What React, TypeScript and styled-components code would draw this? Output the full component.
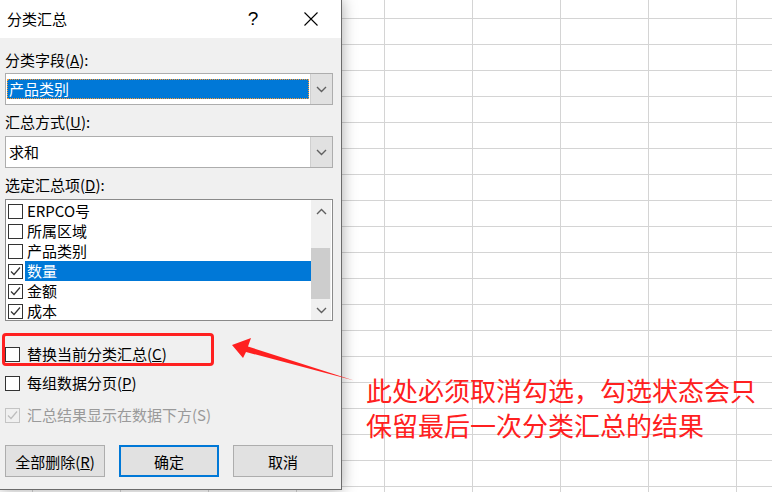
import React from 'react'
import styled, { createGlobalStyle } from 'styled-components'

type Field = {
  name: string;
  checked: boolean;
}

const fields: Field[] = [
  { name: 'ERPCO号', checked: false },
  { name: '所属区域', checked: false },
  { name: '产品类别', checked: false },
  { name: '数量', checked: true },
  { name: '金额', checked: true },
  { name: '成本', checked: true },
]

const selectedField = '数量'

const CheckMark = ({ color }: { color: string }) => (
  <svg width="13" height="13" viewBox="0 0 13 13">
    <path d="M2 6.5 L5 9.5 L11 2.5" fill="none" stroke={color} strokeWidth="1.2" />
  </svg>
)

const Chevron = ({ dir }: { dir: 'up' | 'down' }) => (
  <svg width="11" height="7" viewBox="0 0 11 7">
    <path
      d={dir === 'down' ? 'M1 1 L5.5 5.5 L10 1' : 'M1 6 L5.5 1.5 L10 6'}
      fill="none"
      stroke="#606060"
      strokeWidth="1.4"
    />
  </svg>
)

const CheckBox = ({ checked, disabled }: { checked: boolean; disabled?: boolean }) => (
  <Box $disabled={disabled}>
    {checked && <CheckMark color={disabled ? '#bdbdbd' : '#333'} />}
  </Box>
)

export default function App() {
  return (
    <Sheet>
      <GlobalStyle />
      <Dialog>
        <TitleBar>
          <Title>分类汇总</Title>
          <TitleButtons>
            <HelpButton>?</HelpButton>
            <CloseButton>
              <svg width="14" height="14" viewBox="0 0 14 14">
                <path d="M0.5 0.5 L13.5 13.5 M13.5 0.5 L0.5 13.5" stroke="#000" strokeWidth="1.1" />
              </svg>
            </CloseButton>
          </TitleButtons>
        </TitleBar>

        <Body>
          <Label $gap={0}>分类字段(<u>A</u>):</Label>
          <Combo $gap={3}>
            <ComboValue>
              <ComboSelected>产品类别</ComboSelected>
            </ComboValue>
            <ComboArrow><Chevron dir="down" /></ComboArrow>
          </Combo>

          <Label $gap={7}>汇总方式(<u>U</u>):</Label>
          <Combo $gap={4}>
            <ComboValue>
              <ComboText>求和</ComboText>
            </ComboValue>
            <ComboArrow><Chevron dir="down" /></ComboArrow>
          </Combo>

          <Label $gap={7}>选定汇总项(<u>D</u>):</Label>
          <ListBox>
            <ListItems>
              {fields.map((f) => (
                <ListRow key={f.name}>
                  <CheckBox checked={f.checked} />
                  <ListText $selected={f.name === selectedField}>{f.name}</ListText>
                </ListRow>
              ))}
            </ListItems>
            <ScrollBar>
              <ScrollArrow $size={22}><Chevron dir="up" /></ScrollArrow>
              <ScrollTrack>
                <Thumb $offset={26} $length={51} />
              </ScrollTrack>
              <ScrollArrow $size={20}><Chevron dir="down" /></ScrollArrow>
            </ScrollBar>
          </ListBox>

          <OptionRow $gap={23}>
            <CheckBox checked={false} />
            <OptionText>替换当前分类汇总(<u>C</u>)</OptionText>
          </OptionRow>
          <OptionRow $gap={9}>
            <CheckBox checked={false} />
            <OptionText>每组数据分页(<u>P</u>)</OptionText>
          </OptionRow>
          <OptionRow $gap={12}>
            <CheckBox checked disabled />
            <OptionText $disabled>汇总结果显示在数据下方(S)</OptionText>
          </OptionRow>

          <ButtonRow>
            <Button>全部删除(<u>R</u>)</Button>
            <Button $primary>确定</Button>
            <Button>取消</Button>
          </ButtonRow>
        </Body>

        <RedFrame />
      </Dialog>

      <ArrowLayer width="772" height="492" viewBox="0 0 772 492">
        <polygon
          points="232,345 251,338 248,346.5 354,380.5 246,352 243,358"
          fill="#ff2020"
        />
      </ArrowLayer>

      <Note>
        此处必须取消勾选，勾选状态会只<br />
        保留最后一次分类汇总的结果
      </Note>
    </Sheet>
  )
}

const GlobalStyle = createGlobalStyle`
  html, body {
    margin: 0;
    padding: 0;
  }
  body {
    font-family: "Noto Sans CJK SC", "Noto Sans", sans-serif;
    background: #fff;
  }
`

const Sheet = styled.div`
  position: relative;
  width: 772px;
  height: 492px;
  overflow: hidden;
  background-color: #fff;
  background-image:
    linear-gradient(to right, #d4d4d4 1px, transparent 1px),
    linear-gradient(to bottom, #d4d4d4 1px, transparent 1px);
  background-size: 88px 100%, 100% 26px;
  background-position: 32px 0, 0 18px;
`

const Dialog = styled.div`
  position: relative;
  width: 341px;
  height: 489px;
  background: #f0f0f0;
  border-right: 1px solid #6b6b6b;
  border-bottom: 1px solid #6b6b6b;
  box-shadow: 0 0 14px rgba(0, 0, 0, 0.35);
  display: flex;
  flex-direction: column;
  font-size: 15px;
  color: #000;
`

const TitleBar = styled.div`
  height: 38px;
  background: #fff;
  display: flex;
  align-items: center;
  padding-left: 7px;
`

const Title = styled.div`
  font-size: 15px;
  line-height: 20px;
`

const TitleButtons = styled.div`
  margin-left: auto;
  margin-right: 7px;
  display: flex;
  gap: 12px;
`

const HelpButton = styled.div`
  width: 46px;
  height: 38px;
  display: flex;
  align-items: center;
  justify-content: center;
  font-family: "Liberation Sans", sans-serif;
  font-size: 19px;
`

const CloseButton = styled.div`
  width: 46px;
  height: 38px;
  display: flex;
  align-items: center;
  justify-content: center;
`

const Body = styled.div`
  display: flex;
  flex-direction: column;
  padding: 12px 8px 0 5px;
`

const Label = styled.div<{ $gap: number }>`
  margin-top: ${(p) => p.$gap}px;
  height: 20px;
  line-height: 20px;
  white-space: nowrap;
`

const Combo = styled.div<{ $gap: number }>`
  margin-top: ${(p) => p.$gap}px;
  height: 32px;
  box-sizing: border-box;
  border: 1px solid #adadad;
  background: #fff;
  display: flex;
`

const ComboValue = styled.div`
  flex: 1;
  padding: 5px 1px 5px 1px;
  display: flex;
`

const ComboSelected = styled.div`
  flex: 1;
  height: 20px;
  line-height: 20px;
  padding-left: 2px;
  background: #0078d7;
  color: #fff;
  outline: 1px dotted #ff9a30;
  outline-offset: -1px;
`

const ComboText = styled.div`
  flex: 1;
  height: 20px;
  line-height: 20px;
  padding-left: 2px;
`

const ComboArrow = styled.div`
  width: 21px;
  background: #e1e1e1;
  border-left: 1px solid #cfcfcf;
  display: flex;
  align-items: center;
  justify-content: center;
`

const ListBox = styled.div`
  margin-top: 4px;
  height: 122px;
  box-sizing: border-box;
  border: 1px solid #8a8a8a;
  background: #fff;
  display: flex;
  overflow: hidden;
`

const ListItems = styled.div`
  flex: 1;
  padding-top: 1px;
  display: flex;
  flex-direction: column;
`

const ListRow = styled.div`
  height: 20px;
  display: flex;
  align-items: center;
  padding-left: 2px;
`

const ListText = styled.div<{ $selected: boolean }>`
  flex: 1;
  margin-left: 2px;
  padding-left: 2px;
  height: 20px;
  line-height: 20px;
  background: ${(p) => (p.$selected ? '#0078d7' : 'transparent')};
  color: ${(p) => (p.$selected ? '#fff' : '#000')};
`

const Box = styled.div<{ $disabled?: boolean }>`
  width: 15px;
  height: 15px;
  flex: none;
  box-sizing: border-box;
  border: 1px solid ${(p) => (p.$disabled ? '#c4c4c4' : '#333')};
  background: ${(p) => (p.$disabled ? '#f0f0f0' : '#fff')};
  display: flex;
  align-items: center;
  justify-content: center;
`

const ScrollBar = styled.div`
  width: 20px;
  margin-right: 1px;
  background: #f0f0f0;
  display: flex;
  flex-direction: column;
`

const ScrollArrow = styled.div<{ $size: number }>`
  height: ${(p) => p.$size}px;
  display: flex;
  align-items: center;
  justify-content: center;
`

const ScrollTrack = styled.div`
  flex: 1;
  display: flex;
  flex-direction: column;
`

const Thumb = styled.div<{ $offset: number; $length: number }>`
  margin-top: ${(p) => p.$offset}px;
  height: ${(p) => p.$length}px;
  margin-right: 1px;
  background: #cdcdcd;
`

const OptionRow = styled.div<{ $gap: number }>`
  margin-top: ${(p) => p.$gap}px;
  height: 20px;
  display: flex;
  align-items: center;
  gap: 7px;
`

const OptionText = styled.div<{ $disabled?: boolean }>`
  line-height: 20px;
  white-space: nowrap;
  color: ${(p) => (p.$disabled ? '#9a9a9a' : '#000')};
`

const ButtonRow = styled.div`
  margin-top: 20px;
  display: flex;
  justify-content: space-between;
`

const Button = styled.div<{ $primary?: boolean }>`
  width: 100px;
  height: 32px;
  box-sizing: border-box;
  background: #e1e1e1;
  border: ${(p) => (p.$primary ? '2px solid #0078d7' : '1px solid #adadad')};
  display: flex;
  align-items: center;
  justify-content: center;
  white-space: nowrap;
`

const RedFrame = styled.div`
  position: absolute;
  left: 2px;
  top: 333px;
  width: 212px;
  height: 33px;
  box-sizing: border-box;
  border: 3px solid #ff2020;
  border-radius: 4px;
  pointer-events: none;
`

const ArrowLayer = styled.svg`
  position: absolute;
  left: 0;
  top: 0;
  pointer-events: none;
`

const Note = styled.div`
  position: absolute;
  left: 366px;
  top: 372px;
  font-size: 26px;
  line-height: 35px;
  color: #ff2020;
  white-space: nowrap;
`
